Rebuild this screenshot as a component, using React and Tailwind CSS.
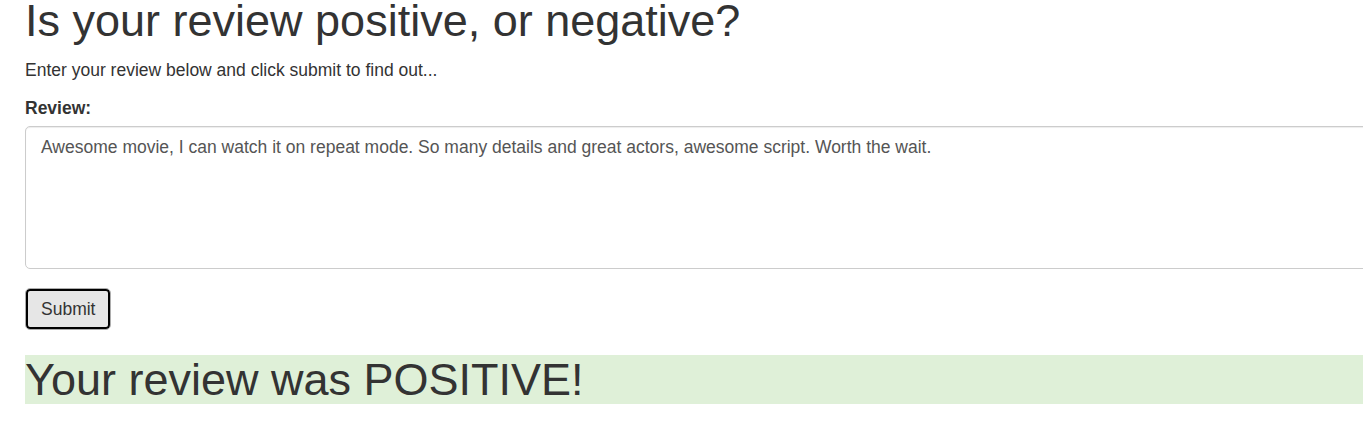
import React, { useState } from 'react';

function App() {
  const [review, setReview] = useState(
    'Awesome movie, I can watch it on repeat mode. So many details and great actors, awesome script. Worth the wait.'
  );

  return (
    <div className="w-full overflow-hidden bg-white font-['Liberation_Sans',Arial,sans-serif] text-[#333]">
      <div className="w-[1420px] pl-[25px] pb-[17px]">
        <h1 className="-mt-1 mb-[12.5px] text-[45px] leading-[49.5px] font-normal">
          Is your review positive, or negative?
        </h1>
        <p className="mb-[12.5px] text-[17.5px] leading-[25px]">
          Enter your review below and click submit to find out...
        </p>

        <form onSubmit={(e) => e.preventDefault()}>
          <div className="mb-[19px]">
            <label className="mb-[5.5px] inline-block text-[17.5px] leading-[25px] font-bold">
              Review:
            </label>
            <textarea
              value={review}
              onChange={(e) => setReview(e.target.value)}
              className="block h-[143px] w-full rounded-[5px] border border-[#ccc] bg-white px-[15px] py-[7.5px] text-[17.5px] leading-[25px] text-[#555] shadow-[inset_0_1px_1px_rgba(0,0,0,0.075)] outline-none"
            />
          </div>
          <button
            type="submit"
            className="h-[42px] rounded-[5px] border border-[#adadad] bg-[#e6e6e6] px-[15px] text-[17.5px] leading-[25px] text-[#333] shadow-[inset_0_0_0_2px_#000]"
          >
            Submit
          </button>
        </form>

        <h1 className="mt-[25px] bg-[#dff0d8] text-[45px] leading-[49px] font-normal">
          Your review was POSITIVE!
        </h1>
      </div>
    </div>
  );
}

export default App;
